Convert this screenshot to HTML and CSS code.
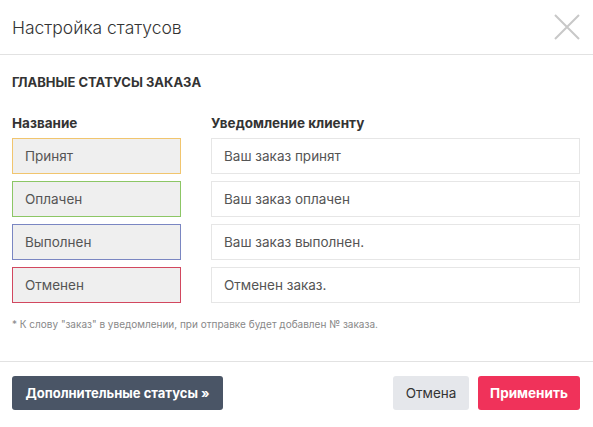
FILE: index.html
```html
<!DOCTYPE html>
<html lang="ru">
<head>
  <meta charset="UTF-8">
  <meta name="viewport" content="width=device-width, initial-scale=1.0">
  <title>Настройка статусов</title>
  <link rel="stylesheet" href="styles.css">
</head>
<body>
  <div class="modal">
    <div class="modal-header">
      <h3>Настройка статусов</h3>
      <button class="close" type="button" aria-label="Закрыть">
        <svg width="26" height="26" viewBox="0 0 26 26"><path d="M1 1L25 25M25 1L1 25" stroke="#c8c8c8" stroke-width="2" fill="none"/></svg>
      </button>
    </div>

    <div class="modal-body">
      <h4>Главные статусы заказа</h4>
      <div class="grid">
        <div class="label">Название</div>
        <div class="label">Уведомление клиенту</div>

        <input class="name st-yellow" type="text" value="Принят" readonly>
        <input class="msg" type="text" value="Ваш заказ принят">

        <input class="name st-green" type="text" value="Оплачен" readonly>
        <input class="msg" type="text" value="Ваш заказ оплачен">

        <input class="name st-blue" type="text" value="Выполнен" readonly>
        <input class="msg" type="text" value="Ваш заказ выполнен.">

        <input class="name st-red" type="text" value="Отменен" readonly>
        <input class="msg" type="text" value="Отменен заказ.">
      </div>
      <p class="note">* К слову "заказ" в уведомлении, при отправке будет добавлен № заказа.</p>
    </div>

    <div class="modal-footer">
      <button class="btn btn-dark" type="button">Дополнительные статусы »</button>
      <div class="actions">
        <button class="btn btn-light" type="button">Отмена</button>
        <button class="btn btn-red" type="button">Применить</button>
      </div>
    </div>
  </div>
</body>
</html>
```

FILE: styles.css
```css
body {
  font-family: Inter, Roboto, "Liberation Sans", sans-serif;
  background-color: #fff;
  margin: 0;
  color: #333;
}
.modal {
  width: 593px;
}
.modal-header {
  display: flex;
  justify-content: space-between;
  align-items: center;
  height: 55px;
  padding: 0 12px 0 12px;
  border-bottom: 1px solid #e2e2e2;
  box-sizing: border-box;
}
.modal-header h3 {
  margin: 0;
  font-size: 17.5px;
  font-weight: 300;
  color: #333;
}
.close {
  background: none;
  border: none;
  padding: 0;
  width: 26px;
  height: 26px;
  margin-right: 1px;
  cursor: pointer;
}
.modal-body {
  padding: 19px 13px 0 12px;
}
.modal-body h4 {
  margin: 0 0 25px;
  font-size: 13px;
  font-weight: 700;
  text-transform: uppercase;
  color: #333;
}
.grid {
  display: grid;
  grid-template-columns: 169px 1fr;
  column-gap: 30px;
  row-gap: 7px;
}
.label {
  font-size: 13.5px;
  font-weight: 700;
  color: #333;
  margin-bottom: 0;
}
input {
  font-family: inherit;
  font-size: 13.5px;
  color: #555;
  height: 36px;
  padding: 0 12px;
  border: 1px solid #e6e6e6;
  border-radius: 0;
  box-sizing: border-box;
  width: 100%;
  outline: none;
}
.name {
  background-color: #efefef;
}
.st-yellow { border-color: #f1c56e; }
.st-green { border-color: #8cc665; }
.st-blue { border-color: #7a86c2; }
.st-red { border-color: #d2475f; }
.note {
  margin: 15px 0 0;
  font-size: 10px;
  color: #888;
}
.modal-footer {
  margin-top: 31px;
  border-top: 1px solid #e2e2e2;
  padding: 14px 13px 0 12px;
  display: flex;
  justify-content: space-between;
}
.actions {
  display: flex;
  gap: 9px;
}
.btn {
  font-family: inherit;
  font-size: 13.5px;
  height: 34px;
  padding: 0 10px;
  border: none;
  border-radius: 3px;
  white-space: nowrap;
  cursor: pointer;
}
.btn-dark {
  background-color: #4a5566;
  color: #fff;
  font-weight: 700;
  font-size: 13px;
  width: 211px;
}
.btn-light {
  background-color: #e5e7eb;
  color: #333;
  width: 76px;
}
.btn-red {
  background-color: #f0325a;
  color: #fff;
  font-weight: 700;
  width: 102px;
}
```
